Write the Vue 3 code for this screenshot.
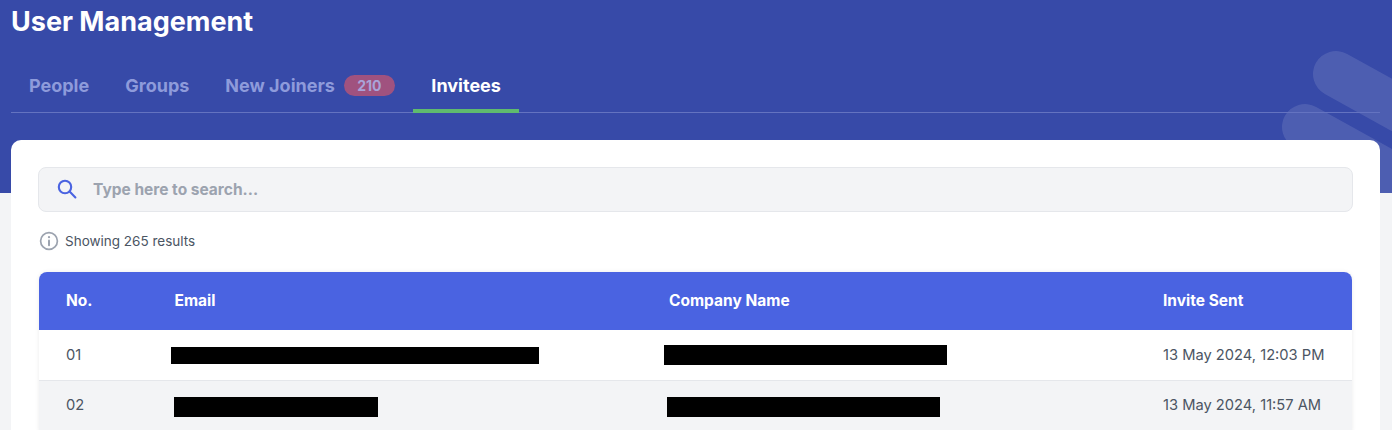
<script setup>
const tabs = [
  { label: 'People' },
  { label: 'Groups' },
  { label: 'New Joiners', badge: 210 },
  { label: 'Invitees', active: true },
]
const rows = [
  { no: '01', sent: '13 May 2024, 12:03 PM', mail: 'mail-a', company: 'company-a', alt: false },
  { no: '02', sent: '13 May 2024, 11:57 AM', mail: 'mail-b', company: 'company-b', alt: true },
]
</script>

<template>
  <div class="page">
    <header class="hero">
      <div class="shape shape-one"></div>
      <div class="shape shape-two"></div>
      <h1 class="title">User Management</h1>
      <nav class="tabs">
        <a v-for="t in tabs" :key="t.label" class="tab" :class="{ active: t.active }">
          {{ t.label }}
          <span v-if="t.badge" class="badge">{{ t.badge }}</span>
        </a>
      </nav>
    </header>
    <main class="card">
      <div class="search">
        <svg class="search-icon" viewBox="0 0 20 20" fill="none" stroke="#4a63e1" stroke-width="2.1" stroke-linecap="round">
          <circle cx="8" cy="8" r="6.2" />
          <path d="M12.6 12.6 L18.4 18.4" />
        </svg>
        <span class="placeholder">Type here to search...</span>
      </div>
      <div class="info">
        <svg class="info-icon" viewBox="0 0 20 20" fill="none" stroke="#9ca3af" stroke-width="1.7" stroke-linecap="round">
          <circle cx="10" cy="10" r="8.4" />
          <path d="M10 9.4 V14.2" stroke-width="2" />
          <path d="M10 6 V6.2" stroke-width="2.2" />
        </svg>
        <span>Showing 265 results</span>
      </div>
      <section class="table">
        <div class="row head">
          <div>No.</div>
          <div>Email</div>
          <div>Company Name</div>
          <div>Invite Sent</div>
        </div>
        <div v-for="r in rows" :key="r.no" class="row body" :class="{ alt: r.alt }">
          <div class="txt">{{ r.no }}</div>
          <div><span class="redact" :class="r.mail"></span></div>
          <div><span class="redact" :class="r.company"></span></div>
          <div class="txt">{{ r.sent }}</div>
        </div>
      </section>
    </main>
  </div>
</template>

<style>
html, body { margin: 0; background: #f3f4f6; overflow: hidden; }
</style>

<style scoped>
.page {
  height: 430px;
  overflow: hidden;
  font-family: Inter, "Liberation Sans", sans-serif;
  background: #f3f4f6;
}
.hero {
  position: relative;
  height: 193px;
  box-sizing: border-box;
  padding: 0 12px 0 11px;
  background: #374aa8;
  overflow: hidden;
}
.shape {
  position: absolute;
  width: 220px;
  height: 46px;
  border-radius: 23px;
  background: rgba(255, 255, 255, 0.115);
  transform-origin: 23px 23px;
  transform: rotate(29deg);
}
.shape-one { left: 1313px; top: 51px; }
.shape-two { left: 1282px; top: 104px; }
.title {
  position: relative;
  margin: 0;
  padding-top: 6px;
  height: 58px;
  box-sizing: border-box;
  font-size: 27px;
  line-height: 32px;
  font-weight: 700;
  color: #fff;
}
.tabs {
  position: relative;
  display: flex;
  height: 55px;
  box-sizing: border-box;
  border-bottom: 1px solid #6473c0;
}
.tab {
  display: flex;
  align-items: center;
  gap: 9px;
  height: 55px;
  padding: 0 18px;
  box-sizing: border-box;
  font-size: 18px;
  font-weight: 700;
  color: #8e9bdb;
}
.tab.active {
  color: #fff;
  border-bottom: 4px solid #5fbb6e;
  padding: 4px 18.5px 0;
}
.badge {
  display: inline-flex;
  align-items: center;
  justify-content: center;
  width: 51px;
  height: 21px;
  border-radius: 11px;
  background: #a0527f;
  font-size: 14px;
  font-weight: 700;
  color: #a9a3d8;
}
.card {
  position: relative;
  margin: -53px 12px 0 11px;
  padding: 27px 27px 0;
  height: 300px;
  background: #fff;
  border-radius: 10px 10px 0 0;
}
.search {
  display: flex;
  align-items: center;
  height: 45px;
  box-sizing: border-box;
  padding: 0 0 0 18px;
  background: #f3f4f6;
  border: 1px solid #e5e7eb;
  border-radius: 8px;
}
.search-icon { width: 20px; height: 20px; flex: none; margin-bottom: 2px; }
.placeholder {
  margin-left: 16px;
  font-size: 15.5px;
  font-weight: 700;
  color: #9ca3af;
}
.info {
  display: flex;
  align-items: center;
  gap: 6px;
  height: 20px;
  margin: 19px 0 0 1px;
  font-size: 13.5px;
  color: #4b5563;
}
.info-icon { width: 20px; height: 20px; flex: none; }
.table {
  margin: 21px 0 0 1px;
  width: 1313px;
  border-radius: 8px 8px 0 0;
  overflow: hidden;
  box-shadow: 0 0 4px rgba(0, 0, 0, 0.08);
}
.row {
  display: grid;
  grid-template-columns: 108.5px 494.5px 494px 1fr;
  align-items: center;
  padding-left: 27px;
}
.head {
  height: 58px;
  padding-bottom: 2px;
  box-sizing: border-box;
  background: #4a63e1;
  color: #fff;
  font-size: 15.5px;
  font-weight: 700;
}
.body {
  height: 51px;
  box-sizing: border-box;
  border-bottom: 1px solid #e5e7eb;
  background: #fff;
  color: #4b5563;
  font-size: 14.7px;
}
.alt .txt { margin-bottom: 3px; }
.body.alt { background: #f3f4f6; border-bottom: 0; }
.redact { display: block; background: #000; }
.mail-a { width: 368px; height: 17px; margin-left: -3.5px; }
.company-a { width: 283px; height: 20px; margin-left: -5px; }
.mail-b { width: 204px; height: 20px; margin-left: -0.5px; }
.company-b { width: 273px; height: 20px; margin-left: -2px; }
</style>
